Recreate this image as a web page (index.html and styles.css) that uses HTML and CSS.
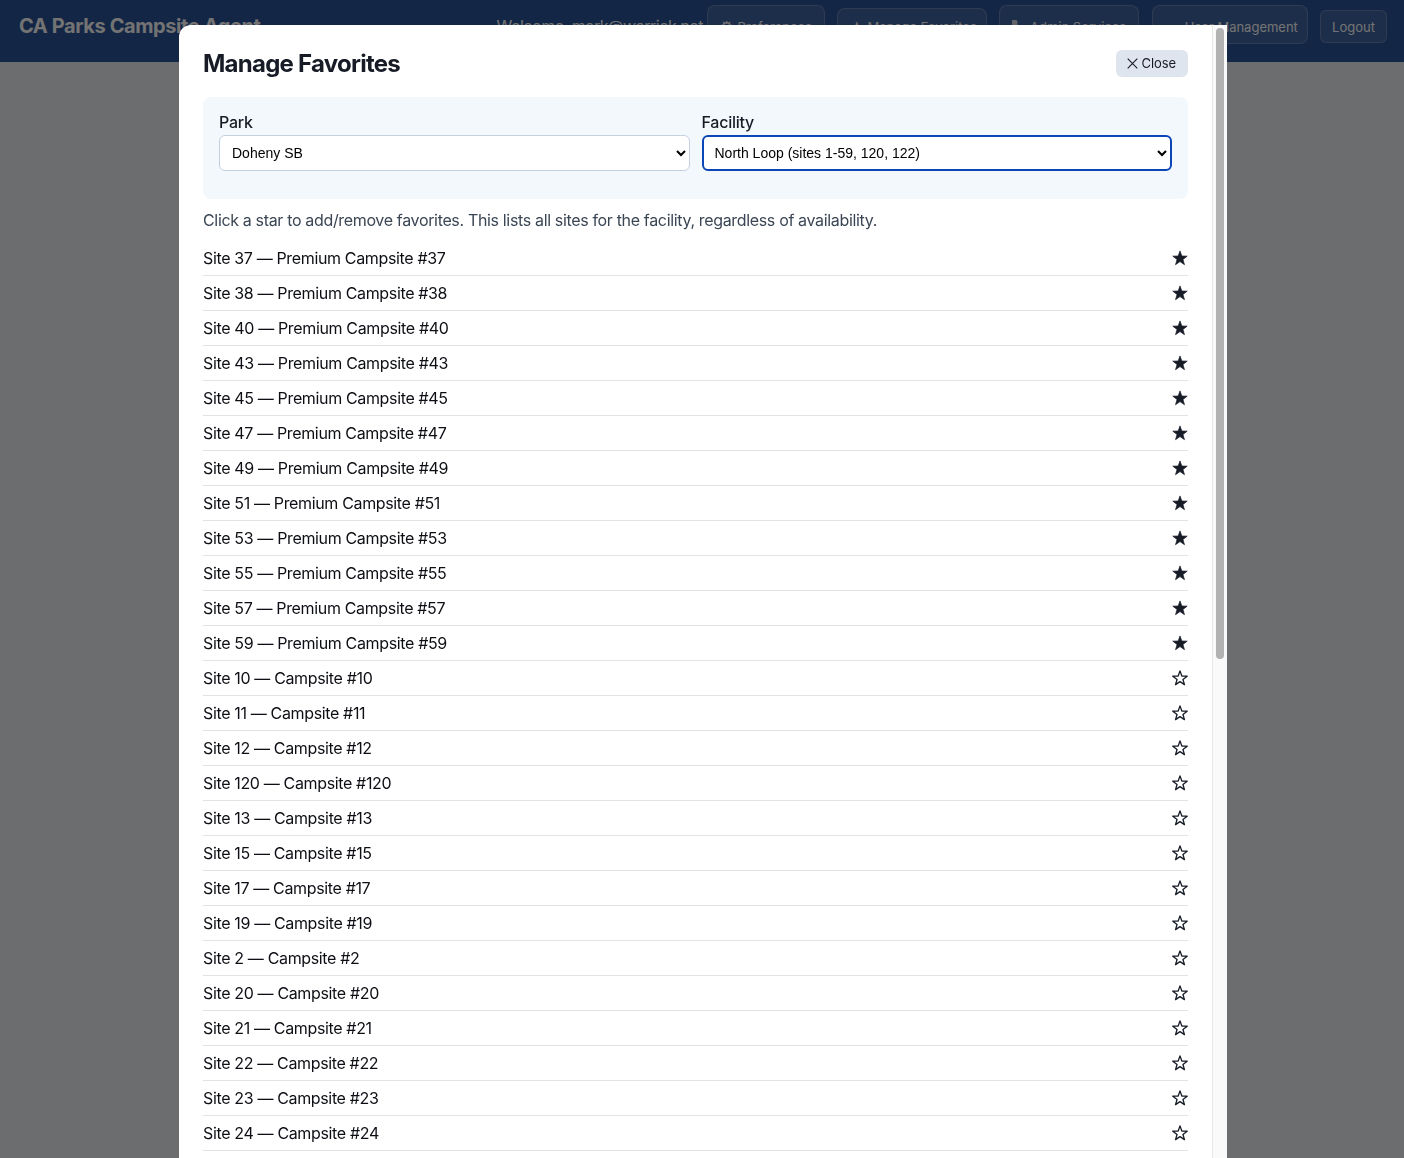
FILE: index.html
```html
<!DOCTYPE html>
<html lang="en">
<head>
    <meta charset="UTF-8">
    <title>CA Parks Campsite Agent</title>
    <link rel="stylesheet" href="styles.css">
</head>
<body>
    <svg class="defs" width="0" height="0">
        <symbol id="star" viewBox="0 0 16 16">
            <polygon points="8,.9 9.82,6 15.2,6.15 10.95,9.46 12.47,14.65 8,11.6 3.53,14.65 5.05,9.46 .77,6.15 6.18,6"/>
        </symbol>
    </svg>

    <header class="topbar">
        <h1 class="brand">CA Parks Campsite Agent</h1>
        <div class="topnav">
            <span class="welcome">Welcome, mark@warrick.net</span>
            <button class="navbtn tall w-pref"><span class="ico">⚙</span>Preferences</button>
            <button class="navbtn mid w-fav"><span class="ico">★</span>Manage Favorites</button>
            <button class="navbtn tall w-admin">
                <svg class="wrench" width="14" height="15" viewBox="0 0 14 15"><path d="M2.5 2.5l9 10.5"/><circle cx="2.5" cy="2.5" r="2"/></svg>Admin Services
            </button>
            <button class="navbtn tall w-user"><span class="ico dots">●●</span>User Management</button>
            <button class="navbtn w-out">Logout</button>
        </div>
    </header>

    <div class="overlay">
        <div class="modal">
            <div class="modal-inner">
                <div class="modal-head">
                    <h2>Manage Favorites</h2>
                    <button class="closebtn">
                        <svg class="x" width="11" height="11" viewBox="0 0 11 11"><path d="M.7.7l9.6 9.6M10.3.7L.7 10.3"/></svg>
                        Close
                    </button>
                </div>
                <div class="filters">
                    <div class="field">
                        <label>Park</label>
                        <select><option>Doheny SB</option></select>
                    </div>
                    <div class="field">
                        <label>Facility</label>
                        <select class="focused"><option>North Loop (sites 1-59, 120, 122)</option></select>
                    </div>
                </div>
                <p class="hint">Click a star to add/remove favorites. This lists all sites for the facility, regardless of availability.</p>
                <ul class="sites">
                    <li>Site 37 — Premium Campsite #37<svg class="star on"><use href="#star"/></svg></li>
                    <li>Site 38 — Premium Campsite #38<svg class="star on"><use href="#star"/></svg></li>
                    <li>Site 40 — Premium Campsite #40<svg class="star on"><use href="#star"/></svg></li>
                    <li>Site 43 — Premium Campsite #43<svg class="star on"><use href="#star"/></svg></li>
                    <li>Site 45 — Premium Campsite #45<svg class="star on"><use href="#star"/></svg></li>
                    <li>Site 47 — Premium Campsite #47<svg class="star on"><use href="#star"/></svg></li>
                    <li>Site 49 — Premium Campsite #49<svg class="star on"><use href="#star"/></svg></li>
                    <li>Site 51 — Premium Campsite #51<svg class="star on"><use href="#star"/></svg></li>
                    <li>Site 53 — Premium Campsite #53<svg class="star on"><use href="#star"/></svg></li>
                    <li>Site 55 — Premium Campsite #55<svg class="star on"><use href="#star"/></svg></li>
                    <li>Site 57 — Premium Campsite #57<svg class="star on"><use href="#star"/></svg></li>
                    <li>Site 59 — Premium Campsite #59<svg class="star on"><use href="#star"/></svg></li>
                    <li>Site 10 — Campsite #10<svg class="star"><use href="#star"/></svg></li>
                    <li>Site 11 — Campsite #11<svg class="star"><use href="#star"/></svg></li>
                    <li>Site 12 — Campsite #12<svg class="star"><use href="#star"/></svg></li>
                    <li>Site 120 — Campsite #120<svg class="star"><use href="#star"/></svg></li>
                    <li>Site 13 — Campsite #13<svg class="star"><use href="#star"/></svg></li>
                    <li>Site 15 — Campsite #15<svg class="star"><use href="#star"/></svg></li>
                    <li>Site 17 — Campsite #17<svg class="star"><use href="#star"/></svg></li>
                    <li>Site 19 — Campsite #19<svg class="star"><use href="#star"/></svg></li>
                    <li>Site 2 — Campsite #2<svg class="star"><use href="#star"/></svg></li>
                    <li>Site 20 — Campsite #20<svg class="star"><use href="#star"/></svg></li>
                    <li>Site 21 — Campsite #21<svg class="star"><use href="#star"/></svg></li>
                    <li>Site 22 — Campsite #22<svg class="star"><use href="#star"/></svg></li>
                    <li>Site 23 — Campsite #23<svg class="star"><use href="#star"/></svg></li>
                    <li>Site 24 — Campsite #24<svg class="star"><use href="#star"/></svg></li>
                </ul>
            </div>
            <div class="scrollbar"><div class="thumb"></div></div>
        </div>
    </div>
</body>
</html>
```

FILE: styles.css
```css
*{
    box-sizing: border-box;
}
html, body{
    height: 100%;
}
body{
    margin: 0;
    background-color: #f0f2f5;
    font-family: Inter, "Liberation Sans", sans-serif;
    color: #1a202c;
    overflow: hidden;
}
.defs{
    position: absolute;
}

/* header behind the modal */
.topbar{
    height: 62px;
    background-color: #2c559a;
    display: flex;
    justify-content: space-between;
    align-items: center;
    padding: 0 17px 10px 19px;
}
.brand{
    margin: 0;
    font-size: 20px;
    font-weight: 700;
    letter-spacing: -0.4px;
    color: #fff;
}
.topnav{
    display: flex;
    align-items: baseline;
    gap: 12px;
    margin-top: -3px;
}
.welcome{
    font-size: 16px;
    letter-spacing: -0.46px;
    color: #fff;
    margin-right: -8px;
}
.navbtn{
    height: 33px;
    padding: 0 12px;
    background-color: rgba(255,255,255,0.1);
    border: 1px solid rgba(255,255,255,0.2);
    border-radius: 6px;
    font-family: inherit;
    font-size: 13px;
    white-space: nowrap;
    color: #fff;
}
.tall{
    height: 39px;
    padding-top: 4px;
    border-radius: 8px;
}
.mid{
    height: 36px;
    padding-top: 2px;
    border-radius: 8px;
}
.w-pref{ width: 118px; }
.w-fav{ width: 150px; }
.w-admin{ width: 140px; margin-right: 1px; }
.w-user{ width: 156px; padding-right: 18px; }
.w-out{ width: 67px; padding: 0; }
.ico{
    font-family: "DejaVu Sans", sans-serif;
    font-size: 15px;
    margin-right: 4px;
}
.dots{
    font-size: 9px;
    color: #8a9dba;
}
.wrench{
    vertical-align: -3px;
    margin-right: 4px;
    fill: #d8dce2;
    stroke: #d8dce2;
    stroke-width: 2;
}

/* modal */
.overlay{
    position: fixed;
    inset: 0;
    background-color: rgba(0,0,0,0.55);
    display: flex;
    padding: 25px 177px 0 179px;
}
.modal{
    position: relative;
    width: 100%;
    height: 100%;
    background-color: #fff;
    border-radius: 12px 0 0 0;
    overflow: hidden;
}
.scrollbar{
    position: absolute;
    top: 0;
    right: 0;
    bottom: 0;
    width: 15px;
    background-color: #fafafa;
    border-left: 1px solid #e8e8e8;
}
.thumb{
    position: absolute;
    top: 3px;
    left: 3px;
    width: 8px;
    height: 631px;
    background-color: #b2b2b2;
    border-radius: 4px;
}
.modal-inner{
    padding: 25px 39px 24px 24px;
}
.modal-head{
    display: flex;
    justify-content: space-between;
    align-items: center;
    margin-bottom: 20px;
}
h2{
    margin: 0;
    font-size: 24px;
    line-height: 27px;
    font-weight: 700;
    letter-spacing: -0.75px;
    color: #161b26;
}
.closebtn{
    display: flex;
    align-items: center;
    gap: 4px;
    height: 27px;
    padding: 0 12px 1px 11px;
    border: 0;
    border-radius: 6px;
    background-color: #dfe5ef;
    font-family: inherit;
    font-size: 13px;
    letter-spacing: -0.1px;
    color: #161b26;
}
.x{
    fill: none;
    stroke: #161b26;
    stroke-width: 1.1;
}

.filters{
    display: grid;
    grid-template-columns: 1fr 1fr;
    gap: 12px;
    padding: 16px 16px 28px;
    background-color: #f3f8fc;
    border-radius: 8px;
}
.field label{
    display: block;
    font-size: 16px;
    font-weight: 500;
    letter-spacing: -0.25px;
    line-height: 19px;
    margin-bottom: 3px;
    color: #161b26;
}
select{
    display: block;
    width: 100%;
    height: 36px;
    padding: 0 8px;
    background-color: #fff;
    border: 1px solid #c3d0e0;
    border-radius: 6px;
    font-family: "Liberation Sans", sans-serif;
    font-size: 14px;
    color: #000;
}
.focused{
    border: 2px solid #0b46b8;
    padding: 0 7px;
}

.hint{
    margin: 11px 0 11px;
    font-size: 16px;
    letter-spacing: -0.34px;
    line-height: 20px;
    color: #3b4654;
}
.sites{
    list-style: none;
    margin: 0;
    padding: 0;
}
.sites li{
    height: 35px;
    display: flex;
    justify-content: space-between;
    align-items: center;
    border-bottom: 1px solid #e2e2e2;
    font-size: 16px;
    letter-spacing: -0.35px;
    color: #0d0f14;
}
.star{
    width: 16px;
    height: 16px;
    fill: none;
    stroke: #161b26;
    stroke-width: 1.3;
    stroke-linejoin: round;
}
.star.on{
    fill: #161b26;
    stroke-width: 0.7;
}
```
